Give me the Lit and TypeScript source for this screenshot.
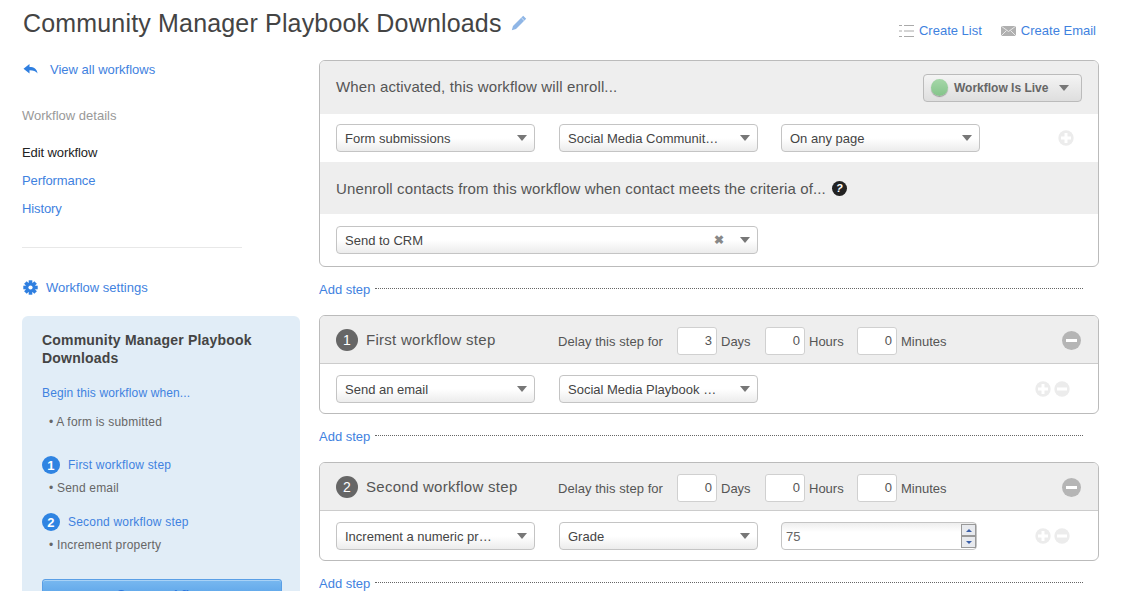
import { LitElement, html, css, svg } from "lit";
import { customElement } from "lit/decorators.js";

const gear = html`<svg class="gear" width="15" height="15" viewBox="0 0 15 15">
  ${[0, 45, 90, 135].map((a) => svg`<rect x="5.7" y="0.3" width="3.6" height="14.4" fill="#2f7fe0" transform="rotate(${a} 7.5 7.5)"/>`)}
  <circle cx="7.5" cy="7.5" r="5" fill="#2f7fe0"/><circle cx="7.5" cy="7.5" r="2.1" fill="#fff"/>
</svg>`;

const plus = (c = "#ececec") => html`<svg width="16" height="16" viewBox="0 0 16 16"><circle cx="8" cy="8" r="7.7" fill="${c}"/><path d="M6.5 3h3v3.5H13v3H9.5V13h-3V9.5H3v-3h3.5z" fill="#fff"/></svg>`;
const minus = (c = "#ececec") => html`<svg width="16" height="16" viewBox="0 0 16 16"><circle cx="8" cy="8" r="7.7" fill="${c}"/><rect x="3" y="6.5" width="10" height="3" fill="#fff"/></svg>`;

@customElement("app-root")
export class AppRoot extends LitElement {
  static styles = css`
    :host { display: block; width: 1126px; height: 591px; overflow: hidden; background: #fff; font-family: "Liberation Sans", Arial, sans-serif; font-size: 13px; color: #444; }
    a { color: #3f82e0; text-decoration: none; }
    .top { display: flex; justify-content: space-between; height: 60px; padding: 0 30px 0 23px; box-sizing: border-box; }
    .title-wrap { display: flex; align-items: center; gap: 9px; height: 46px; }
    h1 { margin: 0; font-size: 25px; font-weight: 400; color: #444; letter-spacing: 0.17px; }
    .actions { display: flex; gap: 19px; padding-top: 23px; height: 16px; line-height: 16px; }
    .actions a { display: flex; align-items: center; gap: 5px; }
    .cols { display: flex; padding-left: 22px; }
    .side { width: 278px; flex: none; margin-right: 19px; }
    .back { display: flex; align-items: center; gap: 12px; height: 18px; }
    .back svg { margin-left: 1px; }
    .det { color: #999; margin: 29px 0 0; height: 18px; line-height: 18px; }
    nav { display: flex; flex-direction: column; margin-top: 14px; }
    nav > * { height: 28px; line-height: 28px; letter-spacing: -0.1px; }
    .cur { color: #222; }
    hr { border: 0; border-top: 1px solid #e8e8e8; width: 220px; margin: 24px 0 30px; }
    .settings { display: flex; align-items: center; gap: 8px; height: 18px; padding-left: 1px; }
    .card { margin-top: 20px; background: #e1edf7; border-radius: 6px; padding: 15px 18px 20px 20px; height: 300px; box-sizing: border-box; }
    .card h3 { margin: 0; font-size: 14px; line-height: 18px; font-weight: 700; color: #444; letter-spacing: 0.2px; }
    .begin { margin-top: 17px; height: 18px; line-height: 18px; font-size: 12px; letter-spacing: 0.13px; }
    .li { color: #666; font-size: 12px; height: 18px; line-height: 18px; padding-left: 7px; letter-spacing: 0.2px; }
    .li.first { margin-top: 11px; }
    .sstep { display: flex; align-items: center; gap: 8px; height: 18px; font-size: 12px; letter-spacing: 0.2px; }
    .sstep.a { margin-top: 25px; }
    .sstep.b { margin-top: 16px; }
    .sstep + .li { margin-top: 5px; }
    .num { width: 18px; height: 18px; border-radius: 50%; background: #2f84e2; color: #fff; font-size: 13px; font-weight: 700; display: flex; align-items: center; justify-content: center; }
    .go { margin-top: 25px; width: 240px; height: 40px; box-sizing: border-box; border: 1px solid #5a9fe6; border-radius: 3px; background: linear-gradient(#78b8f0, #4a98e4 70%); box-shadow: inset 0 1px 0 #a8d2f6; text-align: center; line-height: 30px; color: #2f78dc; font-weight: 700; }
    main { width: 780px; flex: none; }
    .panel { border: 1px solid #bbb; border-radius: 6px; overflow: hidden; }
    .hd { background: #eee; display: flex; align-items: center; padding: 0 16px; box-sizing: border-box; font-size: 15px; letter-spacing: 0.12px; color: #555; }
    .hd.h1 { height: 53px; justify-content: space-between; }
    .hd.h1 > span { padding-bottom: 2px; }
    .hd.h2 { height: 52px; gap: 6px; }
    .hd.step { height: 48px; border-bottom: 1px solid #ccc; padding-top: 2px; font-size: 13px; letter-spacing: 0; }
    .row { display: flex; align-items: center; padding: 0 16px; gap: 24px; position: relative; }
    .row.r1 { height: 48px; }
    .row.r2 { height: 52px; }
    .row.r3 { height: 49px; padding-top: 1px; box-sizing: border-box; }
    .sel { width: 199px; height: 28px; box-sizing: border-box; border: 1px solid #c4c4c4; border-radius: 4px; background: linear-gradient(#fff 50%, #ececec); display: flex; align-items: center; padding: 0 7px 0 8px; color: #444; flex: none; }
    .row > :nth-child(3):not(.ic) { margin-left: -1px; }
    .sel.wide { width: 422px; }
    .sel span { flex: 1; white-space: nowrap; }
    .caret { width: 0; height: 0; border: 5px solid transparent; border-top: 6px solid #777; border-bottom: 0; margin-left: 8px; }
    .x { color: #888; font-size: 12px; font-weight: 700; margin-right: 8px; }
    .ic { position: absolute; top: 50%; transform: translateY(-50%); right: 24px; display: flex; gap: 3px; height: 16px; }
    .ic.two { right: 28px; }
    .add { display: flex; align-items: center; height: 48px; padding-bottom: 4px; box-sizing: border-box; }
    .dots { width: 708px; margin-left: 5px; border-top: 1px dotted #666; position: relative; top: -1px; }
    .badge { display: flex; align-items: center; gap: 6px; font-weight: 700; color: #666; width: 159px; height: 28px; box-sizing: border-box; border: 1px solid #bbb; border-radius: 4px; background: linear-gradient(#f4f4f4, #dedede); padding: 0 12px 0 7px; font-size: 12px; letter-spacing: 0; }
    .badge b { flex: 1; white-space: nowrap; }
    .badge .caret { margin-left: 0; margin-right: 0; }
    .dot { width: 17px; height: 17px; border-radius: 50%; background: linear-gradient(#a6d7a9, #84c48a); box-shadow: 0 1px 1px #999; flex: none; }
    .q { width: 15px; height: 15px; border-radius: 50%; background: #222; color: #fff; font-size: 11px; font-weight: 700; display: flex; align-items: center; justify-content: center; }
    .sn { width: 22px; height: 22px; border-radius: 50%; background: #666; color: #fff; font-size: 14px; display: flex; align-items: center; justify-content: center; flex: none; margin: -2px 8px 0 0; }
    .st { font-size: 15px; letter-spacing: 0.28px; color: #555; width: 192px; margin-top: -2px; }
    .delay { margin-right: 14px; white-space: nowrap; letter-spacing: 0.05px; padding-top: 2px; }
    .un { padding-top: 2px; }
    .in { width: 40px; height: 28px; box-sizing: border-box; border: 1px solid #d0d0d0; border-radius: 3px; background: #fff; text-align: right; padding-right: 4px; line-height: 26px; margin-right: 4px; color: #555; flex: none; }
    .un.days { width: 44px; }
    .un.hours { width: 48px; }
    .hd .rm { margin-left: auto; margin-right: 1px; height: 19px; }
    .numf { width: 196px; height: 28px; box-sizing: border-box; border: 1px solid #c4c4c4; border-radius: 4px; background: linear-gradient(#eee, #fff 35%); display: flex; align-items: center; justify-content: space-between; padding: 0 0 0 4px; color: #666; flex: none; }
    .spin { display: flex; flex-direction: column; margin-right: 0; }
    .spin i { width: 15px; height: 12px; border: 1px solid #999; box-sizing: border-box; background: #e8eaee; display: flex; align-items: center; justify-content: center; }
    .spin i::after { content: ""; border: 3px solid transparent; }
    .spin i.u::after { border-bottom: 3px solid #3b5fa8; border-top: 0; }
    .spin i.d::after { border-top: 3px solid #3b5fa8; border-bottom: 0; }
  `;

  private sel(t: string) {
    return html`<div class="sel"><span>${t}</span><i class="caret"></i></div>`;
  }

  private step(n: number, name: string, days: number, body: unknown) {
    return html`<section class="panel">
        <div class="hd step">
          <div class="sn">${n}</div><div class="st">${name}</div>
          <span class="delay">Delay this step for</span>
          <div class="in">${days}</div><span class="un days">Days</span>
          <div class="in">0</div><span class="un hours">Hours</span>
          <div class="in">0</div><span class="un">Minutes</span>
          <span class="rm">${html`<svg width="19" height="19" viewBox="0 0 19 19"><circle cx="9.5" cy="9.5" r="9.5" fill="#b5b5b5"/><rect x="4" y="8" width="11" height="3" fill="#fff"/></svg>`}</span>
        </div>
        <div class="row r3">${body}<div class="ic two">${plus()}${minus()}</div></div>
      </section>
      <div class="add"><a href="#">Add step</a><i class="dots"></i></div>`;
  }

  render() {
    return html`
      <header class="top">
        <div class="title-wrap">
          <h1>Community Manager Playbook Downloads</h1>
          <svg width="16" height="16" viewBox="0 0 16 16"><path d="M12.2 0.8l3 3L5 14 .8 15.3 2 11z" fill="#8fb6e6"/><path d="M10.4 2.8l2.9 2.9" stroke="#eaf2fb" stroke-width="0.8"/></svg>
        </div>
        <div class="actions">
          <a href="#"><svg width="15" height="12" viewBox="0 0 15 12"><path d="M0 .5h3M5 .5h10M0 6h3M5 6h10M0 11.5h3M5 11.5h10" stroke="#aaa" stroke-width="1"/></svg>Create List</a>
          <a href="#"><svg width="15" height="10" viewBox="0 0 15 10"><rect width="15" height="10" fill="#b0b0b0"/><path d="M0 0l7.5 5.5L15 0M0 10l5.5-5.5M15 10L9.5 4.5" stroke="#e8e8e8" fill="none"/></svg>Create Email</a>
        </div>
      </header>
      <div class="cols">
        <aside class="side">
          <div class="back">
            <svg width="15" height="11" viewBox="0 0 15 11"><path d="M6.5 0v3c4.5 0 7.5 1.800 8 6.500-1.600-2.500-4-3.200-8-3.200V9.500L0.500 4.800z" fill="#2f7fe0"/></svg>
            <a href="#">View all workflows</a>
          </div>
          <div class="det">Workflow details</div>
          <nav>
            <div class="cur">Edit workflow</div>
            <a href="#">Performance</a>
            <a href="#">History</a>
          </nav>
          <hr />
          <a class="settings" href="#">${gear}<span>Workflow settings</span></a>
          <div class="card">
            <h3>Community Manager Playbook Downloads</h3>
            <div class="begin"><a href="#">Begin this workflow when...</a></div>
            <div class="li first">• A form is submitted</div>
            <div class="sstep a"><div class="num">1</div><a href="#">First workflow step</a></div>
            <div class="li">• Send email</div>
            <div class="sstep b"><div class="num">2</div><a href="#">Second workflow step</a></div>
            <div class="li">• Increment property</div>
            <div class="go">Save workflow</div>
          </div>
        </aside>
        <main>
          <section class="panel">
            <div class="hd h1">
              <span>When activated, this workflow will enroll...</span>
              <div class="badge"><i class="dot"></i><b>Workflow Is Live</b><i class="caret"></i></div>
            </div>
            <div class="row r1">
              ${this.sel("Form submissions")}${this.sel("Social Media Communit…")}${this.sel("On any page")}
              <div class="ic">${plus()}</div>
            </div>
            <div class="hd h2"><span>Unenroll contacts from this workflow when contact meets the criteria of...</span><i class="q">?</i></div>
            <div class="row r2">
              <div class="sel wide"><span>Send to CRM</span><b class="x">✖</b><i class="caret"></i></div>
            </div>
          </section>
          <div class="add"><a href="#">Add step</a><i class="dots"></i></div>
          ${this.step(1, "First workflow step", 3, html`${this.sel("Send an email")}${this.sel("Social Media Playbook …")}`)}
          ${this.step(2, "Second workflow step", 0, html`${this.sel("Increment a numeric pr…")}${this.sel("Grade")}
            <div class="numf"><span>75</span><div class="spin"><i class="u"></i><i class="d"></i></div></div>`)}
        </main>
      </div>
    `;
  }
}
